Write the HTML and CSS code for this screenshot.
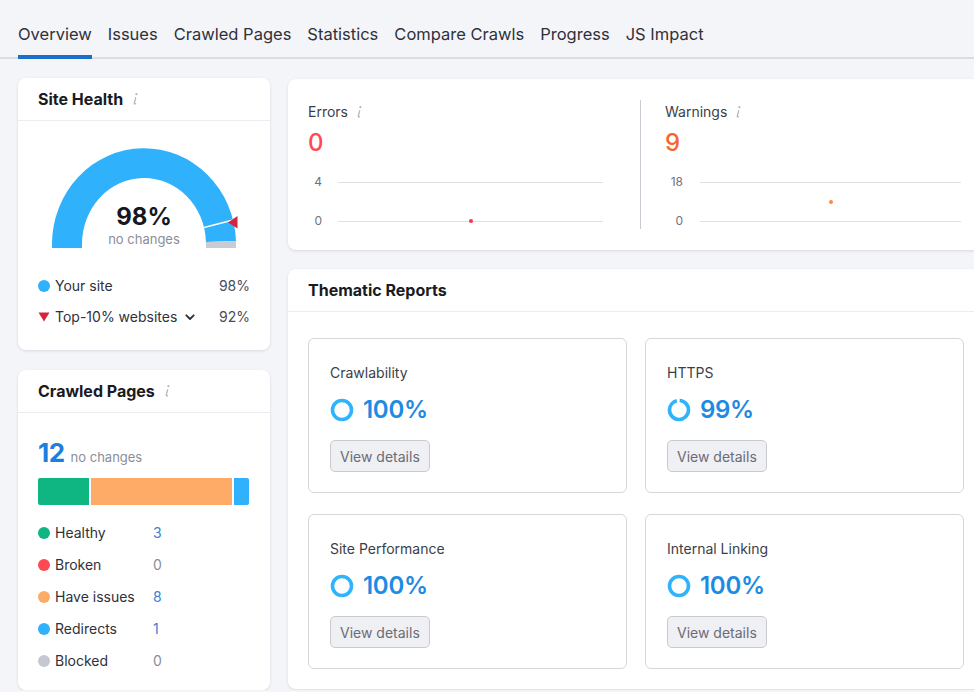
FILE: index.html
```html
<!DOCTYPE html>
<html lang="en">
<head>
<meta charset="utf-8">
<title>Site Audit – Overview</title>
<link rel="stylesheet" href="styles.css">
</head>
<body>
<nav class="tabs">
  <a class="tab active">Overview</a>
  <a class="tab">Issues</a>
  <a class="tab">Crawled Pages</a>
  <a class="tab">Statistics</a>
  <a class="tab">Compare Crawls</a>
  <a class="tab">Progress</a>
  <a class="tab">JS Impact</a>
</nav>

<main class="layout">
  <div class="col-left">
    <section class="card health">
      <header class="card-head">
        <h2 class="card-title">Site Health</h2>
        <svg class="info" viewBox="0 0 6 14" width="6" height="14"><circle cx="4.4" cy="2.2" r="1.1"/><path d="M3.7 5.6 L2.3 11 Q2.1 12.4 3.6 11.7"/></svg>
      </header>
      <div class="gauge">
        <svg class="gauge-svg" viewBox="0 0 184 100" width="184" height="100">
          <path class="g-blue" d="M0 100 L0 96 A92 96 0 0 1 183.95 92.99 L153.97 93.93 A62 66 0 0 0 30 96 L30 100 Z"/>
          <path class="g-grey" d="M183.95 92.99 A92 96 0 0 1 184 96 L184 100 L154 100 L154 96 A62 66 0 0 0 153.97 93.93 Z"/>
          <line class="g-mark" x1="152.05" y1="79.6" x2="181.1" y2="72.1"/>
          <polygon class="g-tri" points="176,74.5 185.5,68 185.5,80.5"/>
        </svg>
        <div class="gauge-text">
          <div class="gauge-val">98%</div>
          <div class="gauge-sub">no changes</div>
        </div>
      </div>
      <ul class="hlegend">
        <li class="hrow"><span class="dot c-blue"></span><span class="hlabel">Your site</span><span class="hval">98%</span></li>
        <li class="hrow"><svg class="tri" viewBox="0 0 12 10" width="12" height="10"><polygon points="0.5,0.5 11.5,0.5 6,9.5"/></svg><span class="hlabel">Top-10% websites</span><svg class="chev" viewBox="0 0 10 7" width="10" height="7"><path d="M1.3 1.3 L5 5 L8.7 1.3"/></svg><span class="hval">92%</span></li>
      </ul>
    </section>

    <section class="card crawled">
      <header class="card-head">
        <h2 class="card-title">Crawled Pages</h2>
        <svg class="info" viewBox="0 0 6 14" width="6" height="14"><circle cx="4.4" cy="2.2" r="1.1"/><path d="M3.7 5.6 L2.3 11 Q2.1 12.4 3.6 11.7"/></svg>
      </header>
      <div class="crawled-body">
        <div class="total"><span class="total-num">12</span><span class="total-sub">no changes</span></div>
        <div class="pbar">
          <span class="seg c-green" style="width:51px"></span>
          <span class="seg c-orange" style="width:141px"></span>
          <span class="seg c-blue" style="width:15px"></span>
        </div>
        <ul class="plegend">
          <li class="prow"><span class="dot c-green"></span><span class="plabel">Healthy</span><span class="pval link">3</span></li>
          <li class="prow"><span class="dot c-red"></span><span class="plabel">Broken</span><span class="pval">0</span></li>
          <li class="prow"><span class="dot c-orange"></span><span class="plabel">Have issues</span><span class="pval link">8</span></li>
          <li class="prow"><span class="dot c-blue"></span><span class="plabel">Redirects</span><span class="pval link">1</span></li>
          <li class="prow"><span class="dot c-grey"></span><span class="plabel">Blocked</span><span class="pval">0</span></li>
        </ul>
      </div>
    </section>
  </div>

  <div class="col-right">
    <section class="card metrics">
      <div class="metric m-errors">
        <div class="m-title">Errors <svg class="info" viewBox="0 0 6 14" width="6" height="14"><circle cx="4.4" cy="2.2" r="1.1"/><path d="M3.7 5.6 L2.3 11 Q2.1 12.4 3.6 11.7"/></svg></div>
        <div class="m-value v-red">0</div>
        <div class="chart">
          <div class="crow"><span class="clbl">4</span><span class="cline"></span></div>
          <div class="crow"><span class="clbl">0</span><span class="cline"><span class="cdot d-red" style="left:50%;top:0"></span></span></div>
        </div>
      </div>
      <div class="vline"></div>
      <div class="metric m-warn">
        <div class="m-title">Warnings <svg class="info" viewBox="0 0 6 14" width="6" height="14"><circle cx="4.4" cy="2.2" r="1.1"/><path d="M3.7 5.6 L2.3 11 Q2.1 12.4 3.6 11.7"/></svg></div>
        <div class="m-value v-orange">9</div>
        <div class="chart">
          <div class="crow"><span class="clbl">18</span><span class="cline"></span></div>
          <div class="crow"><span class="clbl">0</span><span class="cline"><span class="cdot d-orange" style="left:50%;top:-19px"></span></span></div>
        </div>
      </div>
    </section>

    <section class="card thematic">
      <header class="card-head">
        <h2 class="card-title">Thematic Reports</h2>
      </header>
      <div class="reports">
        <div class="report">
          <div class="r-title">Crawlability</div>
          <div class="r-value"><svg class="ring" viewBox="0 0 24 24" width="24" height="24"><circle cx="12" cy="12" r="9.5"/></svg><span>100%</span></div>
          <button class="btn">View details</button>
        </div>
        <div class="report">
          <div class="r-title">HTTPS</div>
          <div class="r-value"><svg class="ring" viewBox="0 0 24 24" width="24" height="24"><circle cx="12" cy="12" r="9.5" stroke-dasharray="56.5 3.2" transform="rotate(-86 12 12)"/></svg><span>99%</span></div>
          <button class="btn">View details</button>
        </div>
        <div class="report">
          <div class="r-title">Site Performance</div>
          <div class="r-value"><svg class="ring" viewBox="0 0 24 24" width="24" height="24"><circle cx="12" cy="12" r="9.5"/></svg><span>100%</span></div>
          <button class="btn">View details</button>
        </div>
        <div class="report">
          <div class="r-title">Internal Linking</div>
          <div class="r-value"><svg class="ring" viewBox="0 0 24 24" width="24" height="24"><circle cx="12" cy="12" r="9.5"/></svg><span>100%</span></div>
          <button class="btn">View details</button>
        </div>
      </div>
    </section>
  </div>
</main>
</body>
</html>
```

FILE: styles.css
```css
* { box-sizing: border-box; }

html, body {
  margin: 0;
  padding: 0;
  overflow: hidden;
  background: #f4f5f9;
  font-family: Inter, "Noto Sans", "Liberation Sans", sans-serif;
  color: #2c2e36;
}

ul { list-style: none; margin: 0; padding: 0; }
h2 { margin: 0; }

/* Tabs */
.tabs {
  display: flex;
  gap: 16px;
  padding: 23px 0 0 18px;
  border-bottom: 2px solid #dcdde3;
  width: 1000px;
}
.tab {
  font-size: 16.5px;
  line-height: 22px;
  padding-bottom: 10px;
  border-bottom: 4px solid transparent;
  margin-bottom: -2px;
  color: #2f3139;
  white-space: nowrap;
}
.tab.active { border-bottom-color: #1a6fc9; }

/* Layout */
.layout {
  display: flex;
  gap: 18px;
  padding: 19px 0 0 18px;
  width: 1010px;
}
.col-left {
  flex: none;
  width: 252px;
  display: flex;
  flex-direction: column;
  gap: 20px;
}
.col-right {
  flex: none;
  width: 695px;
  display: flex;
  flex-direction: column;
  gap: 19px;
  margin-top: 1px;
}

.card {
  background: #fff;
  border-radius: 8px;
  box-shadow: 0 1px 3px rgba(30, 35, 60, 0.12);
}
.card-head {
  height: 43px;
  display: flex;
  align-items: center;
  padding: 0 20px;
  border-bottom: 1px solid #ebecf0;
}
.card-title {
  font-size: 16px;
  line-height: 20px;
  font-weight: 700;
  color: #191b23;
}

.info {
  fill: #b6b8c1;
  stroke: #b6b8c1;
  margin-left: 9px;
  flex: none;
}
.info path { fill: none; stroke-width: 1.3; stroke-linecap: round; }
.info circle { stroke: none; }

/* Site health */
.health { padding-bottom: 23px; }
.gauge {
  display: grid;
  justify-items: center;
  margin-top: 27px;
}
.gauge-svg, .gauge-text { grid-area: 1 / 1; }
.gauge-svg { overflow: visible; display: block; }
.g-blue { fill: #2fb1fb; }
.g-grey { fill: #c9ccd4; }
.g-mark { stroke: #fff; stroke-width: 1.6; }
.g-tri { fill: #d4243e; }
.gauge-text {
  align-self: end;
  margin-bottom: 1px;
  text-align: center;
}
.gauge-val {
  font-size: 24px;
  line-height: 28px;
  font-weight: 700;
  color: #16181f;
}
.gauge-sub {
  font-size: 13px;
  line-height: 16px;
  color: #8b8e99;
}

.hlegend {
  margin-top: 28px;
  padding: 0 20px;
  display: flex;
  flex-direction: column;
  gap: 11px;
}
.hrow {
  display: flex;
  align-items: center;
  height: 20px;
  font-size: 14px;
  line-height: 20px;
}
.hlabel { margin-left: 5px; color: #2f3139; }
.hval { margin-left: auto; color: #4a4c56; }
.tri { fill: #d4243e; flex: none; }
.chev {
  margin-left: 8px;
  fill: none;
  stroke: #2f3139;
  stroke-width: 1.8;
  stroke-linecap: round;
  stroke-linejoin: round;
}

.dot {
  width: 12px;
  height: 12px;
  border-radius: 50%;
  flex: none;
}
.c-blue { background: #2fb1fb; }
.c-green { background: #10b682; }
.c-orange { background: #ffab68; }
.c-red { background: #ff4953; }
.c-grey { background: #c5c8d0; }

/* Crawled pages */
.crawled-body { padding: 25px 20px 19px; }
.total {
  display: flex;
  align-items: baseline;
  gap: 6px;
  height: 30px;
}
.total-num {
  font-size: 26px;
  line-height: 30px;
  font-weight: 700;
  color: #1b7fdf;
  letter-spacing: -0.5px;
}
.total-sub {
  font-size: 13px;
  color: #8b8e99;
}
.pbar {
  display: flex;
  gap: 2px;
  margin-top: 10px;
  height: 27px;
}
.seg { display: block; height: 100%; }
.seg:first-child { border-radius: 2px 0 0 2px; }
.seg:last-child { border-radius: 0 2px 2px 0; }

.plegend {
  margin-top: 18px;
  display: flex;
  flex-direction: column;
  gap: 12px;
}
.prow {
  display: flex;
  align-items: center;
  height: 20px;
  font-size: 14px;
  line-height: 20px;
}
.plabel { width: 98px; margin-left: 5px; color: #2f3139; }
.pval { color: #8b8e99; }
.pval.link { color: #3a82d6; }

/* Metrics */
.metrics {
  display: flex;
  padding: 21px 0;
}
.metric { flex: none; }
.m-errors { width: 352px; padding: 0 37px 0 20px; }
.m-warn { width: 340px; padding: 0 20px 0 24px; }
.vline { width: 1px; background: #c9cad2; flex: none; }
.m-title {
  margin-top: 2px;
  display: flex;
  align-items: center;
  font-size: 14px;
  line-height: 20px;
  color: #3c3e47;
}
.m-title .info { margin-left: 8px; }
.m-value {
  margin-top: 6px;
  font-size: 24px;
  line-height: 30px;
  font-weight: 500;
}
.v-red { color: #ff4953; }
.v-orange { color: #f4662d; }

.chart {
  margin-top: 16px;
  display: flex;
  flex-direction: column;
  gap: 23px;
}
.crow {
  display: flex;
  align-items: center;
  gap: 16px;
  height: 16px;
}
.clbl {
  width: 14px;
  text-align: right;
  font-size: 12px;
  line-height: 16px;
  color: #70727d;
  flex: none;
}
.m-warn .clbl { width: 18px; }
.m-warn .crow { gap: 17px; }
.cline {
  flex: 1;
  height: 1px;
  background: #dfe0e6;
  position: relative;
}
.cdot {
  position: absolute;
  width: 4px;
  height: 4px;
  border-radius: 50%;
  transform: translate(-50%, -50%);
  margin-top: 0.5px;
}
.d-red { background: #ff3348; }
.d-orange { background: #ff8a3c; }

/* Thematic reports */
.thematic { padding-bottom: 20px; }
.reports {
  display: grid;
  grid-template-columns: 319px 319px;
  column-gap: 18px;
  row-gap: 21px;
  padding: 26px 20px 0;
}
.report {
  border: 1px solid #d6d7dd;
  border-radius: 6px;
  padding: 24px 21px 20px;
  display: flex;
  flex-direction: column;
  align-items: flex-start;
}
.r-title {
  font-size: 14px;
  line-height: 20px;
  color: #3c3e47;
}
.r-value {
  margin-top: 12px;
  display: flex;
  align-items: center;
  gap: 9px;
  font-size: 24px;
  line-height: 30px;
  font-weight: 600;
  color: #1d8ae3;
  letter-spacing: -0.3px;
}
.ring { flex: none; }
.ring circle {
  fill: none;
  stroke: #2fb3fd;
  stroke-width: 3.6;
}
.btn {
  margin-top: 15px;
  height: 32px;
  padding: 0 9px;
  border: 1px solid #c9cad2;
  border-radius: 5px;
  background: #eff0f4;
  font-family: Inter, "Noto Sans", "Liberation Sans", sans-serif;
  font-size: 14px;
  color: #6a6c77;
}
```
